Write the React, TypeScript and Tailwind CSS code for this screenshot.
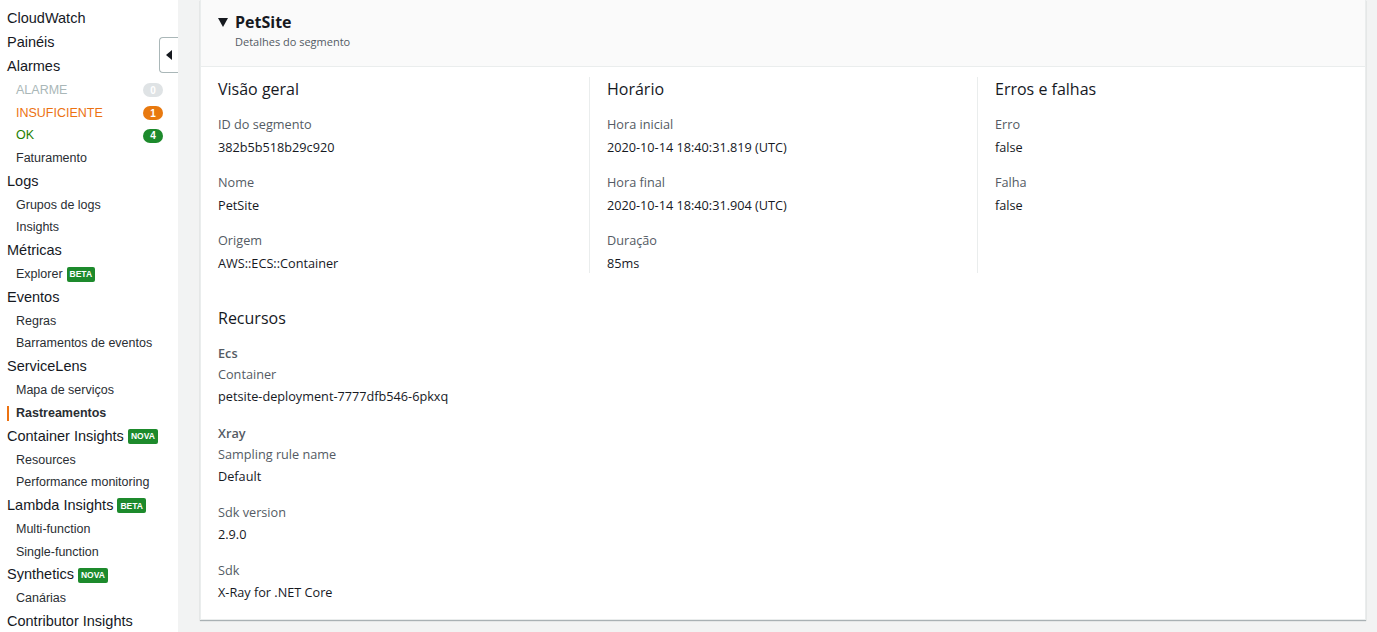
import React from "react";

type NavItem = {
  label: string;
  sub?: boolean;
  tone?: "muted" | "warn" | "ok";
  count?: { n: number; color: string };
  tag?: "BETA" | "NOVA";
  active?: boolean;
};

const nav: NavItem[] = [
  { label: "CloudWatch" },
  { label: "Painéis" },
  { label: "Alarmes" },
  { label: "ALARME", sub: true, tone: "muted", count: { n: 0, color: "bg-[#dfe3e5]" } },
  { label: "INSUFICIENTE", sub: true, tone: "warn", count: { n: 1, color: "bg-[#e8790f]" } },
  { label: "OK", sub: true, tone: "ok", count: { n: 4, color: "bg-[#1d8a2c]" } },
  { label: "Faturamento", sub: true },
  { label: "Logs" },
  { label: "Grupos de logs", sub: true },
  { label: "Insights", sub: true },
  { label: "Métricas" },
  { label: "Explorer", sub: true, tag: "BETA" },
  { label: "Eventos" },
  { label: "Regras", sub: true },
  { label: "Barramentos de eventos", sub: true },
  { label: "ServiceLens" },
  { label: "Mapa de serviços", sub: true },
  { label: "Rastreamentos", sub: true, active: true },
  { label: "Container Insights", tag: "NOVA" },
  { label: "Resources", sub: true },
  { label: "Performance monitoring", sub: true },
  { label: "Lambda Insights", tag: "BETA" },
  { label: "Multi-function", sub: true },
  { label: "Single-function", sub: true },
  { label: "Synthetics", tag: "NOVA" },
  { label: "Canárias", sub: true },
  { label: "Contributor Insights" },
];

const toneClass = {
  muted: "text-[#aab7b8]",
  warn: "text-[#ec7211]",
  ok: "text-[#1d8102]",
};

function Tag({ text }: { text: string }) {
  return (
    <span className="ml-[4px] inline-flex h-[15px] items-center rounded-[2px] bg-[#1d8a2c] px-[3px] text-[8.5px] font-bold leading-none text-white">
      {text}
    </span>
  );
}

function Sidebar() {
  return (
    <aside className="relative w-[178px] shrink-0 bg-white pt-[7px] font-['Liberation_Sans',Arial,sans-serif]">
      {nav.map((item) => (
        <div
          key={item.label}
          className={`relative flex items-center pr-[15px] ${
            item.sub ? "h-[22.7px] pl-[16px] text-[12.5px]" : "h-[24px] pl-[7px] text-[14.5px]"
          } ${item.tone ? toneClass[item.tone] : item.sub ? "text-[#2a2e33]" : "text-[#16191f]"} ${
            item.active ? "font-bold" : ""
          }`}
        >
          {item.active && (
            <span className="absolute left-[7px] top-[4px] h-[15px] w-[2px] bg-[#ec7211]" />
          )}
          <span>{item.label}</span>
          {item.tag && <Tag text={item.tag} />}
          {item.count && (
            <span
              className={`ml-auto flex h-[14px] w-[20px] items-center justify-center rounded-full text-[10px] font-bold text-white ${item.count.color}`}
            >
              {item.count.n}
            </span>
          )}
        </div>
      ))}
      <button className="absolute right-0 top-[37px] flex h-[36px] w-[19px] items-center justify-center rounded-l-[4px] border border-r-0 border-[#aab7b8] bg-white">
        <svg width="6" height="10" viewBox="0 0 6 10">
          <path d="M6 0 L0 5 L6 10 Z" fill="#16191f" />
        </svg>
      </button>
    </aside>
  );
}

function Field({ label, value, first }: { label: string; value: string; first?: boolean }) {
  return (
    <div className={first ? "mt-[13px]" : "mt-[15px]"}>
      <div className="h-[20px] leading-[20px] text-[#545b64]">{label}</div>
      <div className="mt-[3px] h-[20px] leading-[20px] text-[#16191f]">{value}</div>
    </div>
  );
}

function Column({
  title,
  fields,
  divider,
}: {
  title: string;
  fields: [string, string][];
  divider?: boolean;
}) {
  return (
    <div className={`pl-[17px] pr-[17px] ${divider ? "border-l border-[#eaeded]" : ""}`}>
      <h3 className="h-[24px] text-[16px] leading-[24px] text-[#16191f]">{title}</h3>
      {fields.map(([l, v], i) => (
        <Field key={l} label={l} value={v} first={i === 0} />
      ))}
    </div>
  );
}

function ResourceGroup({
  name,
  fields,
  first,
}: {
  name: string;
  fields: [string, string][];
  first?: boolean;
}) {
  return (
    <div className={first ? "mt-[13px]" : "mt-[17px]"}>
      <div className="h-[20px] font-semibold leading-[20px] text-[#545b64]">{name}</div>
      {fields.map(([l, v], i) => (
        <div key={l} className={i === 0 ? "mt-[1px]" : "mt-[16px]"}>
          <div className="h-[20px] leading-[20px] text-[#545b64]">{l}</div>
          <div className="mt-[2px] h-[20px] leading-[20px] text-[#16191f]">{v}</div>
        </div>
      ))}
    </div>
  );
}

export default function App() {
  return (
    <div className="flex h-[632px] w-full overflow-hidden bg-[#f2f3f3]">
      <Sidebar />
      <main className="flex-1 pl-[22px] pr-[11px] font-['Open_Sans',sans-serif] text-[12.7px]">
        <section className="border-x border-b border-[#eaeded] bg-white shadow-[0_1px_1px_rgba(0,28,36,0.3)]">
          <header className="h-[67px] border-b border-[#eaeded] bg-[#fafafa] pl-[17px] pt-[10px]">
            <div className="flex items-center">
              <svg width="10" height="9" viewBox="0 0 10 9" className="mr-[7px]">
                <path d="M0 0 L10 0 L5 9 Z" fill="#16191f" />
              </svg>
              <h2 className="text-[16px] font-bold leading-[24px] text-[#16191f]">PetSite</h2>
            </div>
            <p className="pl-[17px] text-[11px] leading-[16px] text-[#545b64]">Detalhes do segmento</p>
          </header>
          <div className="pt-[10px] pb-[17px]">
            <div className="grid grid-cols-3">
              <Column
                title="Visão geral"
                fields={[
                  ["ID do segmento", "382b5b518b29c920"],
                  ["Nome", "PetSite"],
                  ["Origem", "AWS::ECS::Container"],
                ]}
              />
              <Column
                title="Horário"
                divider
                fields={[
                  ["Hora inicial", "2020-10-14 18:40:31.819 (UTC)"],
                  ["Hora final", "2020-10-14 18:40:31.904 (UTC)"],
                  ["Duração", "85ms"],
                ]}
              />
              <Column
                title="Erros e falhas"
                divider
                fields={[
                  ["Erro", "false"],
                  ["Falha", "false"],
                ]}
              />
            </div>
            <div className="mt-[33px] pl-[17px]">
              <h3 className="h-[24px] text-[16px] leading-[24px] text-[#16191f]">Recursos</h3>
              <ResourceGroup
                first
                name="Ecs"
                fields={[["Container", "petsite-deployment-7777dfb546-6pkxq"]]}
              />
              <ResourceGroup
                name="Xray"
                fields={[
                  ["Sampling rule name", "Default"],
                  ["Sdk version", "2.9.0"],
                  ["Sdk", "X-Ray for .NET Core"],
                ]}
              />
            </div>
          </div>
        </section>
      </main>
    </div>
  );
}
